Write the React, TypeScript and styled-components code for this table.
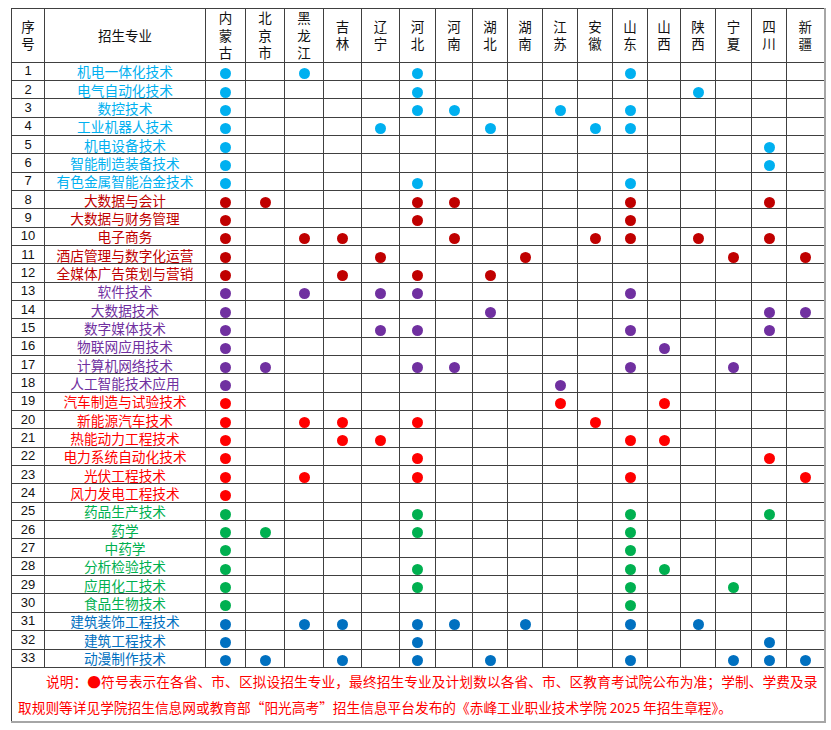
import React from "react";
import styled, { createGlobalStyle } from "styled-components";

const GlobalStyle = createGlobalStyle`
  html, body { margin: 0; padding: 0; background: #ffffff; }
  body { font-family: "Noto Sans CJK SC", "Liberation Sans", sans-serif; }
`;

const C = {
  lb: "#00B0F0",
  dr: "#C00000",
  pu: "#7030A0",
  rd: "#FF0000",
  gr: "#00B050",
  bl: "#0070C0",
};

const provinces = [
  "内蒙古", "北京市", "黑龙江", "吉林", "辽宁", "河北", "河南", "湖北", "湖南",
  "江苏", "安徽", "山东", "山西", "陕西", "宁夏", "四川", "新疆",
];

const colWidths = [33, 161, 40, 39, 39, 38, 38, 36, 37, 35, 35, 35, 35, 35, 33, 35, 36, 35, 38];

type Row = { name: string; color: string; at: string[] };

const rows: Row[] = [
  { name: "机电一体化技术", color: C.lb, at: ["内蒙古", "黑龙江", "河北", "山东"] },
  { name: "电气自动化技术", color: C.lb, at: ["内蒙古", "河北", "陕西"] },
  { name: "数控技术", color: C.lb, at: ["内蒙古", "河北", "河南", "江苏", "山东"] },
  { name: "工业机器人技术", color: C.lb, at: ["内蒙古", "辽宁", "湖北", "安徽", "山东"] },
  { name: "机电设备技术", color: C.lb, at: ["内蒙古", "四川"] },
  { name: "智能制造装备技术", color: C.lb, at: ["内蒙古", "四川"] },
  { name: "有色金属智能冶金技术", color: C.lb, at: ["内蒙古", "河北", "山东"] },
  { name: "大数据与会计", color: C.dr, at: ["内蒙古", "北京市", "河北", "河南", "山东", "四川"] },
  { name: "大数据与财务管理", color: C.dr, at: ["内蒙古", "河北", "山东"] },
  { name: "电子商务", color: C.dr, at: ["内蒙古", "黑龙江", "吉林", "河南", "安徽", "山东", "陕西", "四川"] },
  { name: "酒店管理与数字化运营", color: C.dr, at: ["内蒙古", "辽宁", "湖南", "宁夏", "新疆"] },
  { name: "全媒体广告策划与营销", color: C.dr, at: ["内蒙古", "吉林", "河北", "湖北"] },
  { name: "软件技术", color: C.pu, at: ["内蒙古", "黑龙江", "辽宁", "河北", "山东"] },
  { name: "大数据技术", color: C.pu, at: ["内蒙古", "湖北", "四川", "新疆"] },
  { name: "数字媒体技术", color: C.pu, at: ["内蒙古", "辽宁", "河北", "山东", "四川"] },
  { name: "物联网应用技术", color: C.pu, at: ["内蒙古", "山西"] },
  { name: "计算机网络技术", color: C.pu, at: ["内蒙古", "北京市", "河北", "河南", "山东", "宁夏"] },
  { name: "人工智能技术应用", color: C.pu, at: ["内蒙古", "江苏"] },
  { name: "汽车制造与试验技术", color: C.rd, at: ["内蒙古", "江苏", "山西"] },
  { name: "新能源汽车技术", color: C.rd, at: ["内蒙古", "黑龙江", "吉林", "河北", "安徽"] },
  { name: "热能动力工程技术", color: C.rd, at: ["内蒙古", "吉林", "辽宁", "山东", "山西"] },
  { name: "电力系统自动化技术", color: C.rd, at: ["内蒙古", "河北", "四川"] },
  { name: "光伏工程技术", color: C.rd, at: ["内蒙古", "黑龙江", "河北", "山东", "新疆"] },
  { name: "风力发电工程技术", color: C.rd, at: ["内蒙古"] },
  { name: "药品生产技术", color: C.gr, at: ["内蒙古", "河北", "山东", "四川"] },
  { name: "药学", color: C.gr, at: ["内蒙古", "北京市", "河北", "山东"] },
  { name: "中药学", color: C.gr, at: ["内蒙古", "山东"] },
  { name: "分析检验技术", color: C.gr, at: ["内蒙古", "河北", "山东", "山西"] },
  { name: "应用化工技术", color: C.gr, at: ["内蒙古", "河北", "山东", "宁夏"] },
  { name: "食品生物技术", color: C.gr, at: ["内蒙古", "山东"] },
  { name: "建筑装饰工程技术", color: C.bl, at: ["内蒙古", "黑龙江", "吉林", "河北", "河南", "湖南", "山东", "陕西"] },
  { name: "建筑工程技术", color: C.bl, at: ["内蒙古", "河北", "四川"] },
  { name: "动漫制作技术", color: C.bl, at: ["内蒙古", "北京市", "吉林", "河北", "湖北", "山东", "宁夏", "四川", "新疆"] },
];

const Page = styled.div`
  padding: 8px 0 0 11px;
`;

const Table = styled.table`
  border-collapse: collapse;
  table-layout: fixed;
  width: 814px;
  border-right: 2px solid #a6a6a6;
  border-bottom: 2px solid #a6a6a6;
`;

const Col = styled.col<{ $w: number }>`
  width: ${(p) => p.$w}px;
`;

const HeadRow = styled.tr`
  height: 53px;
`;

const HeadCell = styled.th`
  border: 1px solid #404040;
  padding: 0;
  font-weight: 400;
  font-size: 13.5px;
  line-height: 17.5px;
  color: #111;
  text-align: center;
  vertical-align: middle;
  font-family: "Noto Sans CJK SC", sans-serif;
`;

const VerticalText = styled.span`
  display: inline-block;
  width: 1em;
  word-break: break-all;
  white-space: normal;
`;

const BodyRow = styled.tr`
  height: 18.35px;
`;

const Cell = styled.td`
  border: 1px solid #404040;
  padding: 0;
  text-align: center;
  vertical-align: middle;
  line-height: 16px;
`;

const NumCell = styled(Cell)`
  font-family: "Liberation Sans", Arial, sans-serif;
  font-size: 13px;
  color: #111;
`;

const NameCell = styled(Cell)<{ $color: string }>`
  font-family: "Noto Sans CJK SC", sans-serif;
  font-size: 13.7px;
  color: ${(p) => p.$color};
  white-space: nowrap;
`;

const Dot = styled.span<{ $color: string }>`
  display: inline-block;
  width: 11px;
  height: 11px;
  border-radius: 50%;
  background: ${(p) => p.$color};
  vertical-align: middle;
`;

const FootRow = styled.tr`
  height: 54px;
`;

const FootCell = styled.td`
  border: 1px solid #404040;
  padding: 0 6px 1px 6px;
`;

const Note = styled.p`
  margin: 0;
  font-family: "Noto Sans CJK SC", sans-serif;
  font-size: 13.7px;
  line-height: 26px;
  color: #ff0000;
  text-indent: 28px;
  text-align: justify;
`;

export default function App() {
  return (
    <>
      <GlobalStyle />
      <Page>
        <Table>
          <colgroup>
            {colWidths.map((w, i) => (
              <Col key={i} $w={w} />
            ))}
          </colgroup>
          <thead>
            <HeadRow>
              <HeadCell>
                <VerticalText>序号</VerticalText>
              </HeadCell>
              <HeadCell>招生专业</HeadCell>
              {provinces.map((p) => (
                <HeadCell key={p}>
                  <VerticalText>{p}</VerticalText>
                </HeadCell>
              ))}
            </HeadRow>
          </thead>
          <tbody>
            {rows.map((r, i) => (
              <BodyRow key={r.name}>
                <NumCell>{i + 1}</NumCell>
                <NameCell $color={r.color}>{r.name}</NameCell>
                {provinces.map((p) => (
                  <Cell key={p}>{r.at.includes(p) ? <Dot $color={r.color} /> : null}</Cell>
                ))}
              </BodyRow>
            ))}
            <FootRow>
              <FootCell colSpan={19}>
                <Note>
                  说明：●符号表示在各省、市、区拟设招生专业，最终招生专业及计划数以各省、市、区教育考试院公布为准；学制、学费及录取规则等详见学院招生信息网或教育部“阳光高考”招生信息平台发布的《赤峰工业职业技术学院 2025 年招生章程》。
                </Note>
              </FootCell>
            </FootRow>
          </tbody>
        </Table>
      </Page>
    </>
  );
}
